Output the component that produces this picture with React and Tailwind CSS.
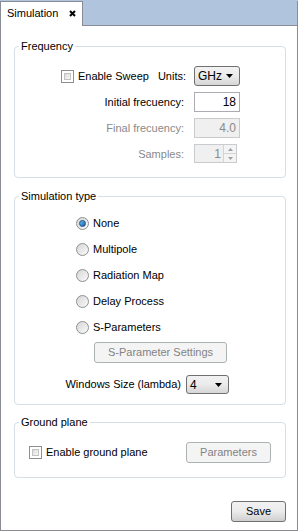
import React from "react";

function CheckBox() {
  return (
    <span className="w-[13px] h-[13px] border border-[#8e8f8f] bg-white p-[2px] shrink-0">
      <span className="block w-full h-full border border-[#c3c3c3] bg-gradient-to-br from-[#dcdcdc] to-[#f8f8f8]" />
    </span>
  );
}

function Radio({ checked }) {
  return (
    <span className="w-[13px] h-[13px] rounded-full border border-[#8e8f8f] bg-gradient-to-br from-[#d6d6d6] to-[#fafafa] flex items-center justify-center shrink-0">
      {checked && (
        <span className="w-[7px] h-[7px] rounded-full bg-gradient-to-br from-[#6fc0f0] to-[#0f5da8] border border-[#1a4f86]" />
      )}
    </span>
  );
}

function Arrow() {
  return (
    <svg width="7" height="4" viewBox="0 0 7 4" className="shrink-0">
      <path d="M0 0h7L3.5 4z" fill="#000" />
    </svg>
  );
}

function Combo({ value, w }) {
  return (
    <div
      className={`${w} h-full border border-[#707070] rounded-[3px] bg-gradient-to-b from-[#f2f2f2] via-[#ebebeb] to-[#d6d6d6] flex items-center justify-between pl-[3px] pr-[6px]`}
    >
      <span className="text-[12px]">{value}</span>
      <Arrow />
    </div>
  );
}

function Legend({ children }) {
  return <legend className="ml-[4px] px-[2px] leading-[14px]">{children}</legend>;
}

function DisabledButton({ children, w }) {
  return (
    <div
      className={`${w} h-[21px] border border-[#adb2b5] rounded-[3px] bg-[#f4f4f4] text-[#838383] flex items-center justify-center`}
    >
      {children}
    </div>
  );
}

export default function App() {
  const radios = ["None", "Multipole", "Radiation Map", "Delay Process", "S-Parameters"];

  return (
    <div
      className="w-[298px] h-[532px] bg-white text-[11px] text-black"
      style={{ fontFamily: '"Liberation Sans", Arial, sans-serif' }}
    >
      {/* tab strip */}
      <div className="h-[26px] bg-[#b0c4de] flex pt-[1px]">
        <div className="w-[83px] h-[25px] bg-white border-l border-t border-r border-[#898c95] flex items-center pl-[6px] pb-[1px]">
          <span>Simulation</span>
          <svg width="7" height="7" viewBox="0 0 7 7" className="ml-[11px]">
            <path d="M1 1l5 5M6 1l-5 5" stroke="#000" strokeWidth="2" />
          </svg>
        </div>
        <div className="flex-1 border-b border-r border-[#898c95]" />
      </div>

      {/* panel */}
      <div className="h-[505px] border-l border-r border-b border-[#898c95] pl-[13px] pr-[11px] pt-[13px] flex flex-col">
        <fieldset className="border border-[#d5dfe5] rounded-[4px] pb-[13px]">
          <Legend>Frequency</Legend>
          <div className="pt-[13px] pr-[45px] flex flex-col gap-[6px]">
            <div className="h-[20px] flex items-center justify-end">
              <CheckBox />
              <span className="ml-[4px]">Enable Sweep</span>
              <span className="ml-[9px]">Units:</span>
              <div className="ml-[8px] h-full">
                <Combo value="GHz" w="w-[46px]" />
              </div>
            </div>
            <div className="h-[20px] flex items-center justify-end">
              <span>Initial frecuency:</span>
              <div className="ml-[10px] w-[46px] h-full border border-[#abadb3] bg-white flex items-center justify-end pr-[3px] text-[12px]">
                18
              </div>
            </div>
            <div className="h-[20px] flex items-center justify-end text-[#8a8a8a]">
              <span>Final frecuency:</span>
              <div className="ml-[10px] w-[46px] h-full border border-[#c9cccf] bg-[#f0f0f0] flex items-center justify-end pr-[3px] text-[12px]">
                4.0
              </div>
            </div>
            <div className="h-[20px] flex items-center justify-end text-[#8a8a8a]">
              <span>Samples:</span>
              <div className="ml-[10px] w-[46px] h-full">
                <div className="w-[43px] h-[19px] border border-[#c9cccf] bg-[#f0f0f0] flex">
                  <div className="flex-1 flex items-center justify-end pr-[2px] text-[12px]">1</div>
                  <div className="w-[13px] flex flex-col border-l border-[#d4d4d4]">
                    <div className="flex-1 flex items-center justify-center border-b border-[#d4d4d4] bg-[#f4f4f4]">
                      <svg width="5" height="3" viewBox="0 0 5 3">
                        <path d="M0 3h5L2.5 0z" fill="#a0a0a0" />
                      </svg>
                    </div>
                    <div className="flex-1 flex items-center justify-center bg-[#f4f4f4]">
                      <svg width="5" height="3" viewBox="0 0 5 3">
                        <path d="M0 0h5L2.5 3z" fill="#a0a0a0" />
                      </svg>
                    </div>
                  </div>
                </div>
              </div>
            </div>
          </div>
        </fieldset>

        <fieldset className="mt-[11px] border border-[#d5dfe5] rounded-[4px] pb-[10px]">
          <Legend>Simulation type</Legend>
          <div className="pt-[12px] pl-[61px] flex flex-col gap-[10px]">
            {radios.map((r, i) => (
              <div key={r} className="h-[16px] flex items-center">
                <Radio checked={i === 0} />
                <span className="ml-[4px]">{r}</span>
              </div>
            ))}
          </div>
          <div className="mt-[7px] pl-[79px]">
            <DisabledButton w="w-[133px]">S-Parameter Settings</DisabledButton>
          </div>
          <div className="mt-[12px] pr-[56px] h-[19px] flex items-center justify-end">
            <span>Windows Size (lambda)</span>
            <div className="ml-[5px] h-full">
              <Combo value="4" w="w-[43px]" />
            </div>
          </div>
        </fieldset>

        <fieldset className="mt-[10px] border border-[#d5dfe5] rounded-[4px] pb-[14px]">
          <Legend>Ground plane</Legend>
          <div className="pt-[13px] px-[14px] h-[34px] flex items-center justify-between">
            <div className="flex items-center">
              <CheckBox />
              <span className="ml-[4px]">Enable ground plane</span>
            </div>
            <DisabledButton w="w-[85px]">Parameters</DisabledButton>
          </div>
        </fieldset>

        <div className="mt-[23px] flex justify-end">
          <div className="w-[55px] h-[21px] border border-[#707070] rounded-[3px] bg-gradient-to-b from-[#f2f2f2] via-[#ebebeb] to-[#cfcfcf] flex items-center justify-center">
            Save
          </div>
        </div>
      </div>
    </div>
  );
}
